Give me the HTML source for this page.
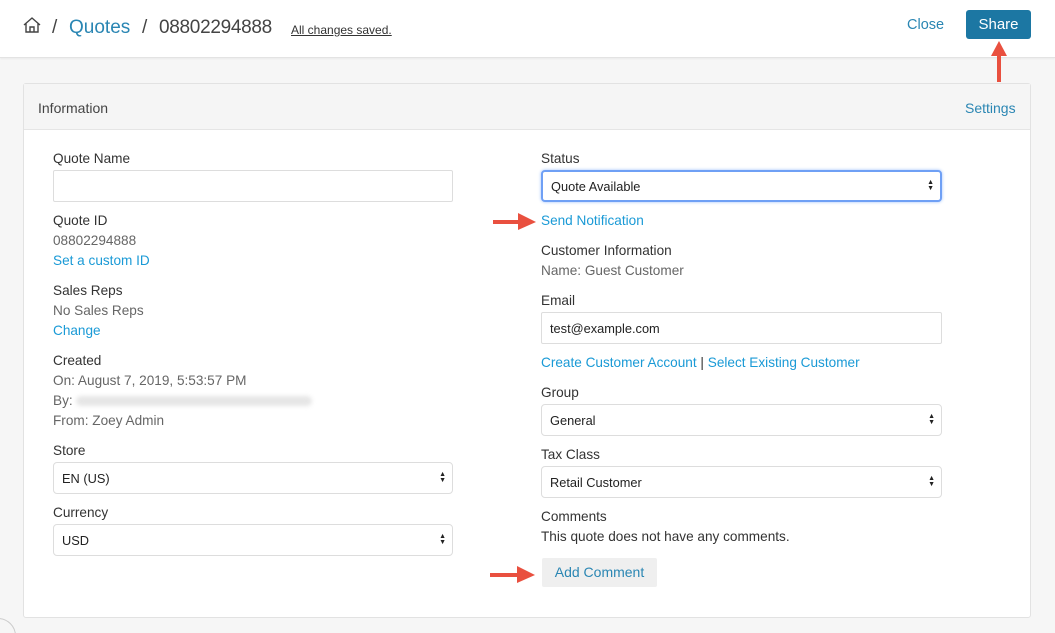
<!DOCTYPE html>
<html><head><meta charset="utf-8"><style>
html,body{margin:0;width:1055px;height:633px;overflow:hidden}
body{background:#f6f6f6;font-family:"Liberation Sans",Arial,sans-serif;position:relative}
.a{position:absolute;white-space:nowrap}
.t{position:absolute;font-size:13.6px;line-height:20px;white-space:nowrap;color:#333}
.g{color:#666}
.l{color:#1a9ad6}
.in{position:absolute;box-sizing:border-box;border:1px solid #ddd;border-radius:2px;background:#fff;font-size:12.8px;color:#222;padding-left:8px;display:flex;align-items:center}
.sel{border-radius:4px}
.ar{position:absolute;right:6px;top:50%;margin-top:-6px;font-size:7px;line-height:6px;color:#222}
</style></head><body>
<div class="a" style="left:0;top:0;width:1055px;height:57px;background:#fff;border-bottom:1px solid #e3e3e3;box-shadow:0 1px 2px rgba(0,0,0,.05)"></div>
<svg class="a" style="left:22px;top:16px" width="20" height="18" viewBox="0 0 20 18"><path d="M2 9 L10 2 L18 9 M4 7.5 V16 H16 V7.5 M8 16 V11 H12 V16" fill="none" stroke="#444" stroke-width="1.4"/></svg>
<div class="a" style="left:52px;top:17px;font-size:19px;color:#444">/</div>
<div class="a" style="left:69px;top:17px;font-size:19px;color:#2a86b3">Quotes</div>
<div class="a" style="left:142px;top:17px;font-size:19px;color:#444">/</div>
<div class="a" style="left:159px;top:17px;font-size:19px;color:#444;letter-spacing:-0.3px">08802294888</div>
<div class="a" style="left:291px;top:23px;font-size:12px;color:#333;text-decoration:underline">All changes saved.</div>
<div class="a" style="left:907px;top:17px;font-size:14.5px;color:#2a86b3">Close</div>
<div class="a" style="left:966px;top:10px;width:65px;height:29px;background:#1c77a3;border-radius:3px;color:#fff;font-size:15px;text-align:center;line-height:29px">Share</div>
<svg class="a" style="left:988px;top:38px" width="22" height="46" viewBox="0 0 22 46"><path d="M11 44 V14" stroke="#e9503f" stroke-width="4"/><path d="M3 18 L11 3 L19 18 Z" fill="#e9503f"/></svg>

<div class="a" style="left:23px;top:83px;width:1006px;height:533px;background:#fff;border:1px solid #e2e2e2;border-radius:3px"></div>
<div class="a" style="left:24px;top:84px;width:1006px;height:45px;background:#f5f5f5;border-bottom:1px solid #e5e5e5"></div>
<div class="a" style="left:38px;top:100px;font-size:14px;color:#444">Information</div>
<div class="a" style="left:965px;top:100px;font-size:14px;color:#2a86b3">Settings</div>

<div class="t" style="left:53px;top:149px">Quote Name</div>
<div class="in" style="left:53px;top:170px;width:400px;height:32px"></div>
<div class="t" style="left:53px;top:211px">Quote ID</div>
<div class="t g" style="left:53px;top:231px">08802294888</div>
<div class="t l" style="left:53px;top:251px">Set a custom ID</div>
<div class="t" style="left:53px;top:281px">Sales Reps</div>
<div class="t g" style="left:53px;top:301px">No Sales Reps</div>
<div class="t l" style="left:53px;top:321px">Change</div>
<div class="t" style="left:53px;top:351px">Created</div>
<div class="t g" style="left:53px;top:371px">On: August 7, 2019, 5:53:57 PM</div>
<div class="t g" style="left:53px;top:391px">By:</div>
<div class="a" style="left:76px;top:396px;width:236px;height:10px;background:#e6e6e6;border-radius:5px;filter:blur(2px)"></div>
<div class="t g" style="left:53px;top:411px">From: Zoey Admin</div>
<div class="t" style="left:53px;top:441px">Store</div>
<div class="in sel" style="left:53px;top:462px;width:400px;height:32px">EN (US)<span class="ar">▲<br>▼</span></div>
<div class="t" style="left:53px;top:503px">Currency</div>
<div class="in sel" style="left:53px;top:524px;width:400px;height:32px">USD<span class="ar">▲<br>▼</span></div>

<div class="t" style="left:541px;top:149px">Status</div>
<div class="in sel" style="left:541px;top:170px;width:401px;height:32px;border:2px solid #6fa0f5;box-shadow:0 0 3px #9ec0fa">Quote Available<span class="ar">▲<br>▼</span></div>
<svg class="a" style="left:490px;top:210px" width="50" height="24" viewBox="0 0 50 24"><path d="M3 12 H32" stroke="#e9503f" stroke-width="4"/><path d="M28 3 L46 12 L28 20 Z" fill="#e9503f"/></svg>
<div class="t l" style="left:541px;top:211px">Send Notification</div>
<div class="t" style="left:541px;top:241px">Customer Information</div>
<div class="t g" style="left:541px;top:261px">Name: Guest Customer</div>
<div class="t" style="left:541px;top:291px">Email</div>
<div class="in" style="left:541px;top:312px;width:401px;height:32px">test@example.com</div>
<div class="t" style="left:541px;top:353px"><span class="l">Create Customer Account</span> | <span class="l">Select Existing Customer</span></div>
<div class="t" style="left:541px;top:383px">Group</div>
<div class="in sel" style="left:541px;top:404px;width:401px;height:32px">General<span class="ar">▲<br>▼</span></div>
<div class="t" style="left:541px;top:445px">Tax Class</div>
<div class="in sel" style="left:541px;top:466px;width:401px;height:32px">Retail Customer<span class="ar">▲<br>▼</span></div>
<div class="t" style="left:541px;top:507px">Comments</div>
<div class="t" style="left:541px;top:527px">This quote does not have any comments.</div>
<svg class="a" style="left:487px;top:563px" width="52" height="24" viewBox="0 0 52 24"><path d="M3 12 H34" stroke="#e9503f" stroke-width="4"/><path d="M30 3 L48 12 L30 20 Z" fill="#e9503f"/></svg>
<div class="a" style="left:542px;top:558px;width:115px;height:29px;background:#efefef;border-radius:2px;color:#2a86b3;font-size:14px;text-align:center;line-height:29px">Add Comment</div>
<div class="a" style="left:-20px;top:618px;width:34px;height:34px;border:1px solid #ccc;border-radius:50%"></div>
</body></html>
